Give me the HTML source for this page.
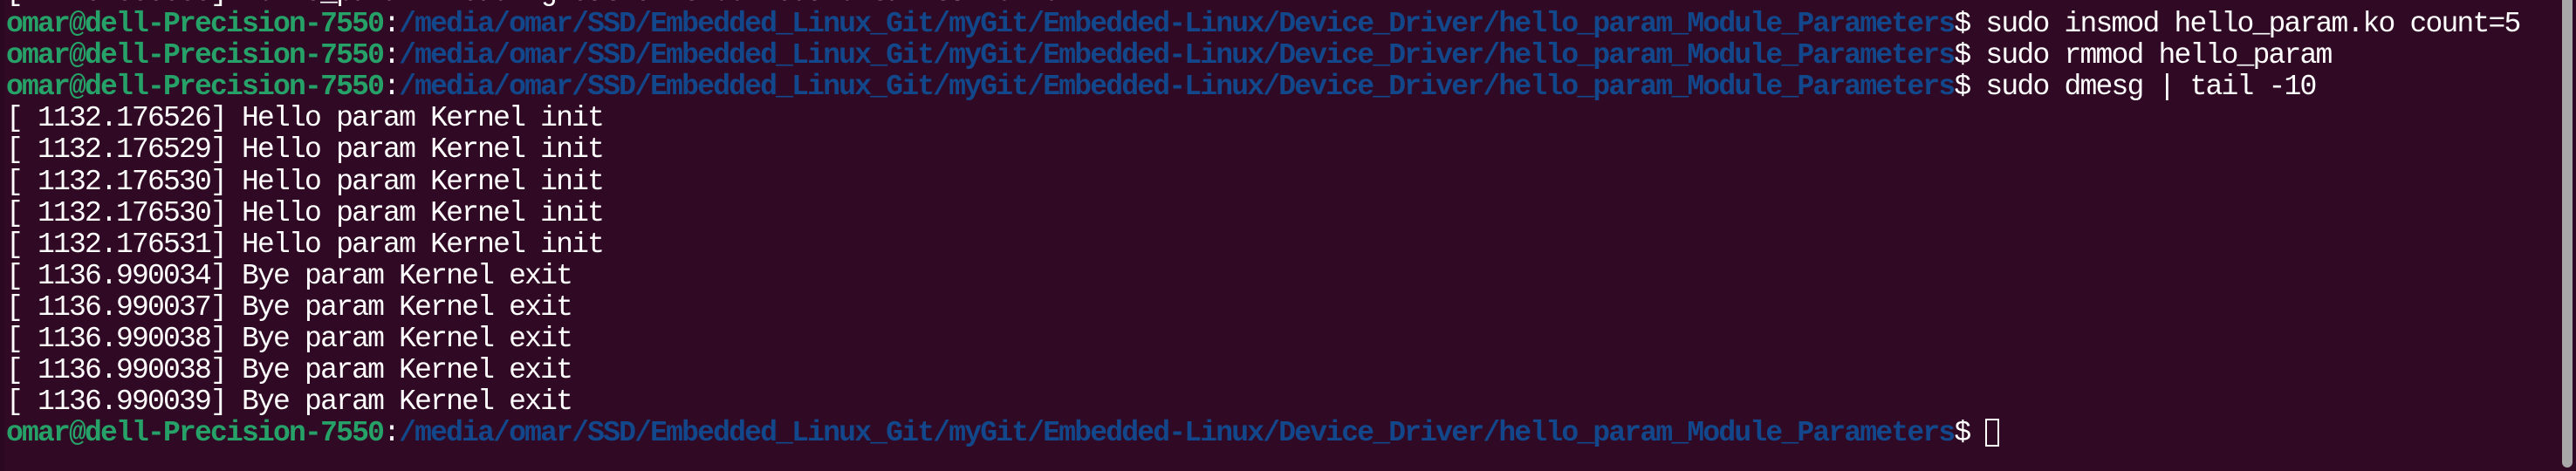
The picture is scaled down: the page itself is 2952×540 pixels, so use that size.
<!DOCTYPE html>
<html><head><meta charset="utf-8"><style>
html,body{margin:0;padding:0;}
body{width:2952px;height:540px;background:#300a24;overflow:hidden;position:relative;}
.t{position:absolute;left:7px;top:-26px;font-family:"Liberation Mono",monospace;font-size:33px;letter-spacing:-1.8px;line-height:36.1px;color:#ffffff;white-space:pre;}
.g{color:#26a269;font-weight:bold;}
.b{color:#12488b;font-weight:bold;}
.cur{display:inline-block;width:16px;height:32px;border:2px solid #fff;vertical-align:-7px;box-sizing:border-box;}
.sb{position:absolute;left:2936px;top:0;width:12px;height:536px;background:#a8a8a8;border-radius:0 0 6px 6px;}
.lb{position:absolute;left:0;top:0;width:5px;height:540px;background:#2a0820;}
</style></head><body>
<div class="lb"></div>
<div class="t">[ 1128.000000] hello_param: loading out-of-tree module taints kernel.
<span class="g">omar@dell-Precision-7550</span>:<span class="b">/media/omar/SSD/Embedded_Linux_Git/myGit/Embedded-Linux/Device_Driver/hello_param_Module_Parameters</span>$ sudo insmod hello_param.ko count=5
<span class="g">omar@dell-Precision-7550</span>:<span class="b">/media/omar/SSD/Embedded_Linux_Git/myGit/Embedded-Linux/Device_Driver/hello_param_Module_Parameters</span>$ sudo rmmod hello_param
<span class="g">omar@dell-Precision-7550</span>:<span class="b">/media/omar/SSD/Embedded_Linux_Git/myGit/Embedded-Linux/Device_Driver/hello_param_Module_Parameters</span>$ sudo dmesg | tail -10
[ 1132.176526] Hello param Kernel init
[ 1132.176529] Hello param Kernel init
[ 1132.176530] Hello param Kernel init
[ 1132.176530] Hello param Kernel init
[ 1132.176531] Hello param Kernel init
[ 1136.990034] Bye param Kernel exit
[ 1136.990037] Bye param Kernel exit
[ 1136.990038] Bye param Kernel exit
[ 1136.990038] Bye param Kernel exit
[ 1136.990039] Bye param Kernel exit
<span class="g">omar@dell-Precision-7550</span>:<span class="b">/media/omar/SSD/Embedded_Linux_Git/myGit/Embedded-Linux/Device_Driver/hello_param_Module_Parameters</span>$ <span class="cur"></span></div>
<div class="sb"></div>
</body></html>
